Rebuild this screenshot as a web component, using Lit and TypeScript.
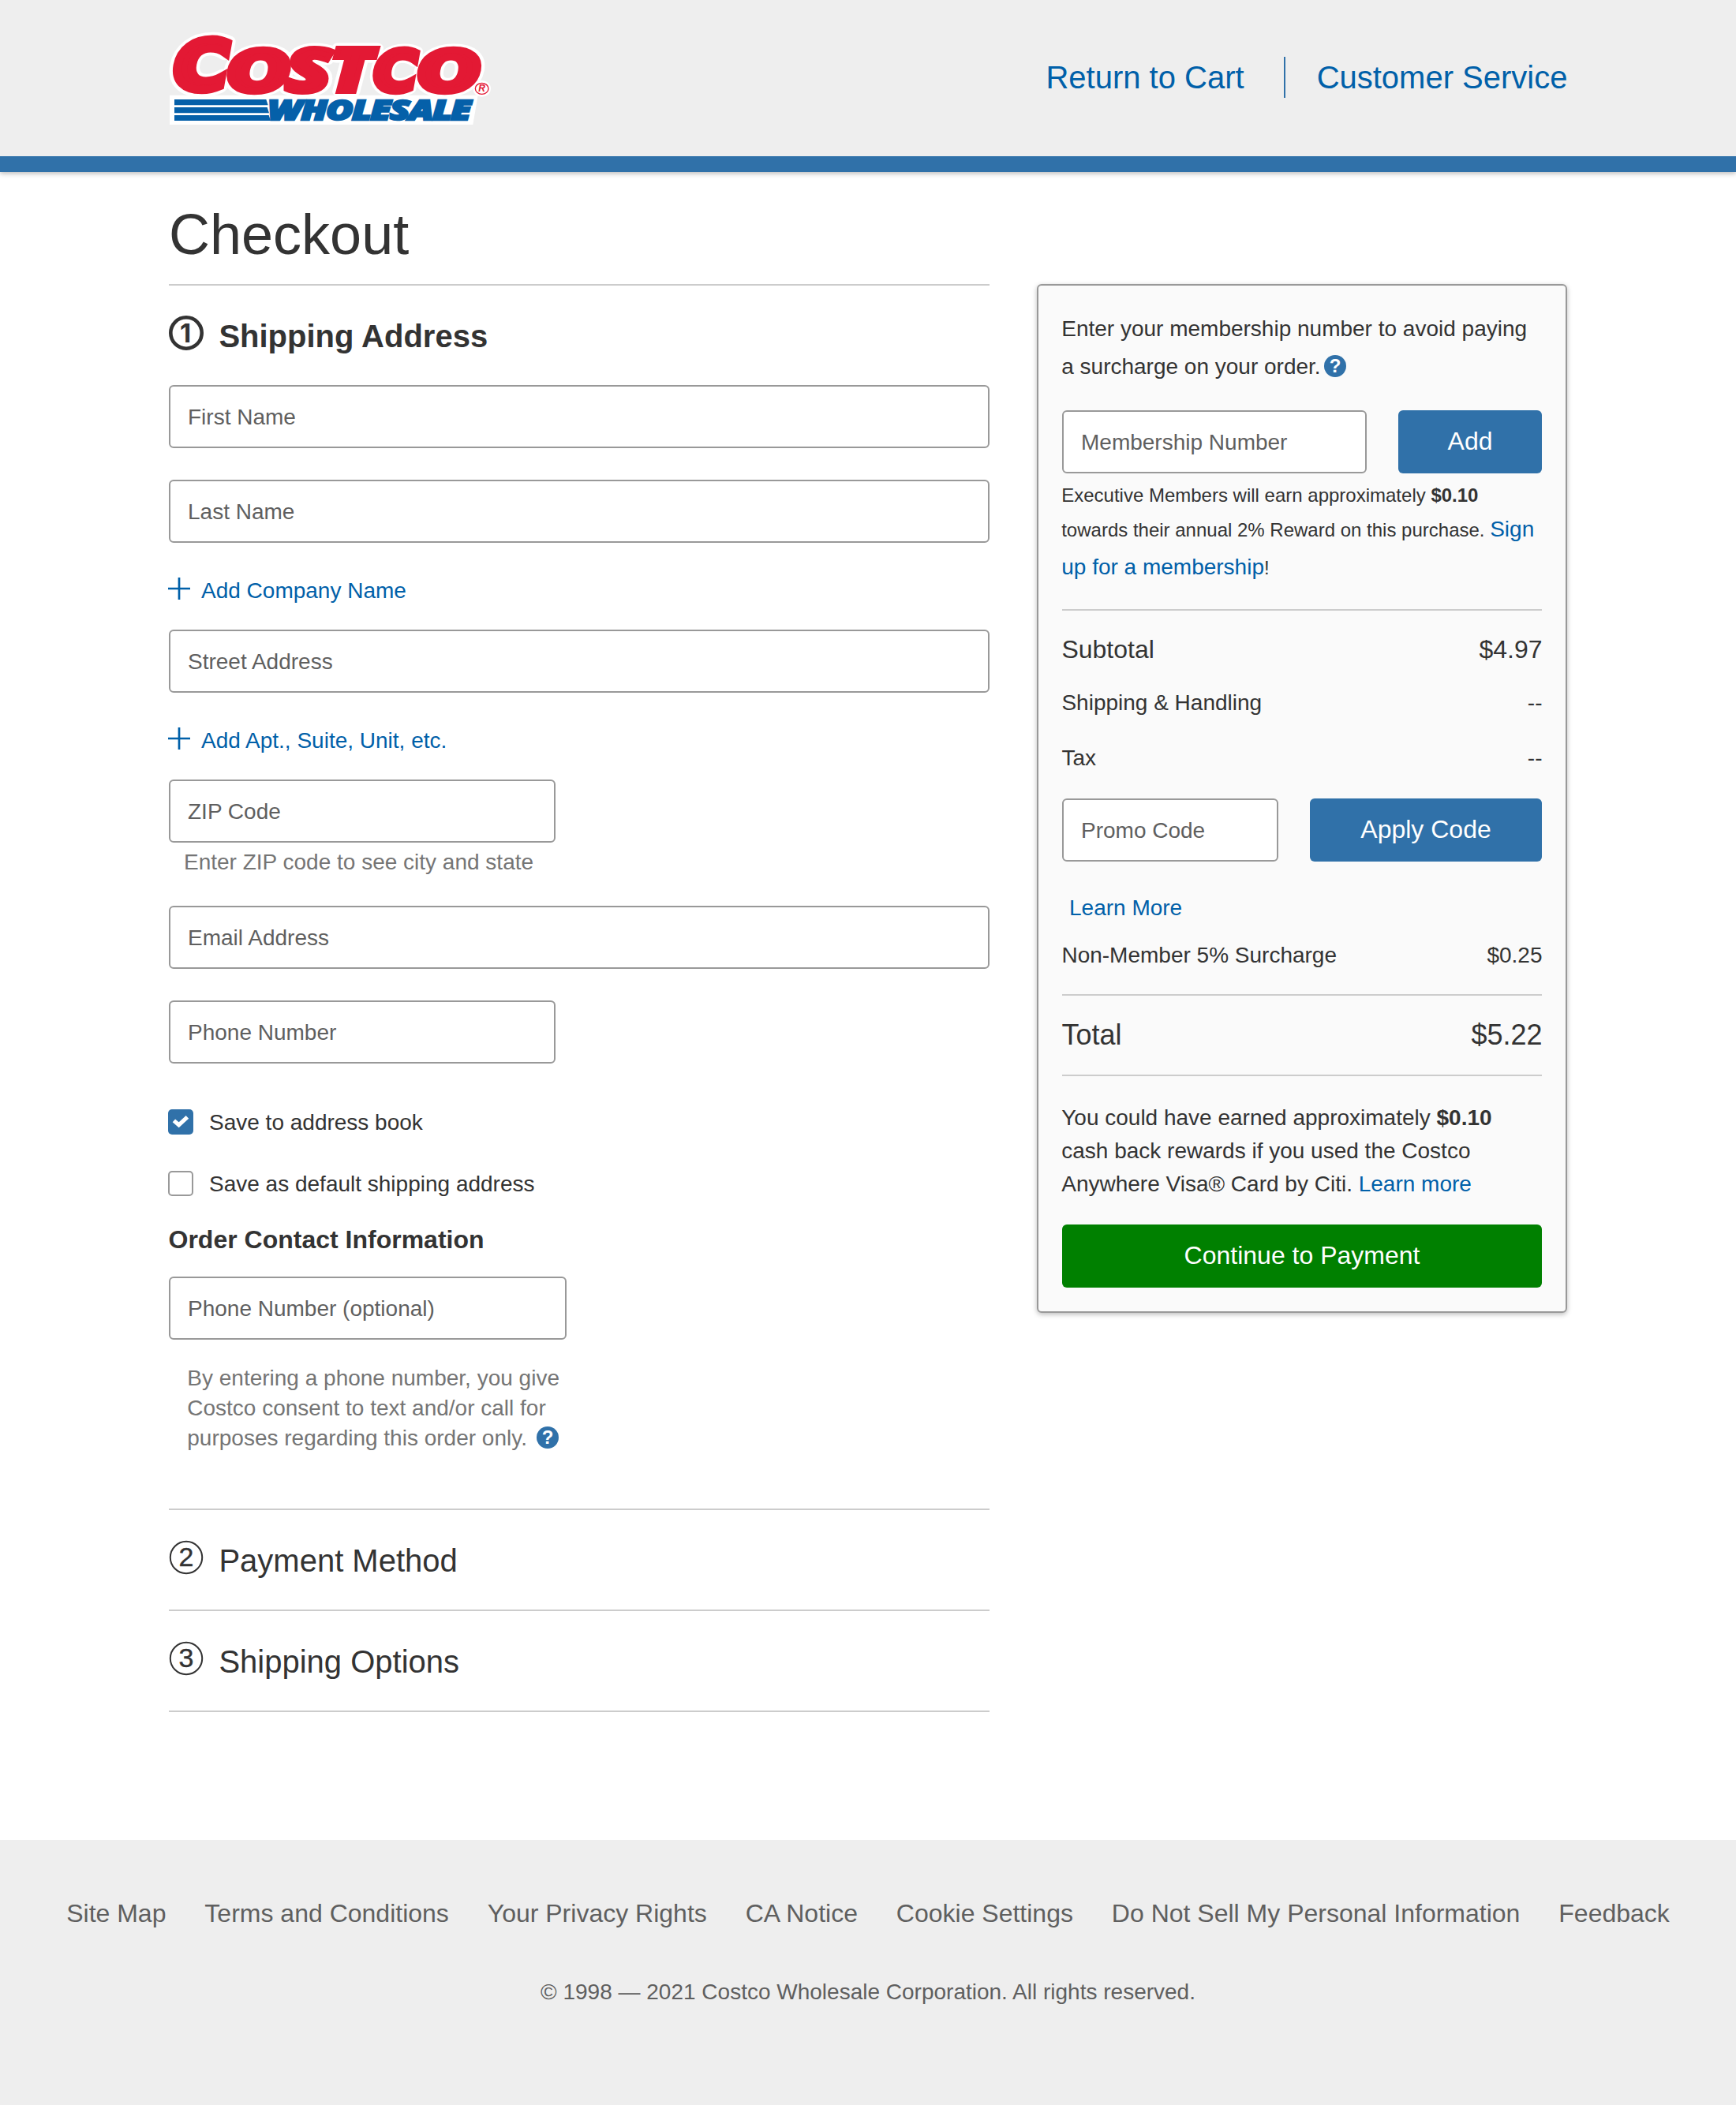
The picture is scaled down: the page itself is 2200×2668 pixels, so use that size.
import { LitElement, html, svg, css } from "lit";

interface Glyph { ch: string; kind: string; x: number; y: number; sx: number; sy: number; slant: number }

// Letter placements in the logo's 1320x420 space; slant is the horizontal shear.
const COSTCO: Glyph[] = [
  { ch: "C", kind: "round", x: 44.8, y: 248.2, sx: 2.82, sy: 2.56, slant: 0.18 },
  { ch: "O", kind: "round", x: 252, y: 255.2, sx: 2.78, sy: 2.11, slant: 0.18 },
  { ch: "S", kind: "sharp", x: 484.4, y: 256.6, sx: 3.19, sy: 2.27, slant: 0 },
  { ch: "T", kind: "sharp", x: 655, y: 257, sx: 2.92, sy: 2.266, slant: 0 },
  { ch: "C", kind: "round", x: 807.3, y: 255.2, sx: 2.25, sy: 2.11, slant: 0.18 },
  { ch: "O", kind: "round", x: 976, y: 255.2, sx: 2.78, sy: 2.11, slant: 0.18 },
];

const FOOTER_LINKS = [
  "Site Map", "Terms and Conditions", "Your Privacy Rights", "CA Notice",
  "Cookie Settings", "Do Not Sell My Personal Information", "Feedback",
];

class CostcoLogo extends LitElement {
  static styles = css`
    :host { display: block; width: 440px; height: 140px; }
    svg { display: block; }
    text { font-family: "Open Sans", "Noto Sans", sans-serif; font-weight: 800; font-style: italic; font-size: 100px; }
    .round { font-family: "DejaVu Sans", sans-serif; font-weight: 700; font-style: normal; stroke-width: 12; }
    .sharp { stroke-width: 8; }
    .red { fill: #e31934; stroke: #e31934; }
    .halo { fill: #fff; stroke: #fff; stroke-linejoin: round; }
    .halo.round { stroke-width: 21; }
    .halo.sharp { stroke-width: 17; }
    .word { letter-spacing: -3px; fill: #0560a9; stroke: #0560a9; stroke-width: 7; }
    .reg { font-family: "Liberation Sans", sans-serif; font-weight: 700; font-size: 36px; fill: #e31934; }
  `;
  render() {
    const letters = (cls: string) => COSTCO.map((g) => svg`
      <text class="${cls} ${g.kind}" transform="matrix(${g.sx} 0 ${-g.slant * g.sy} ${g.sy} ${g.x} ${g.y})">${g.ch}</text>`);
    return html`<svg width="440" height="140" viewBox="0 0 1320 420" role="img" aria-label="Costco Wholesale">
      <g aria-hidden="true">${letters("halo")}</g>
      <path d="M45 272H1217L1198 384H45Z" fill="#fff"/>
      <ellipse cx="1232" cy="247" rx="34" ry="31" fill="#fff"/>
      <path d="M63 288H412L419 310H63ZM63 318H416L423 340H63ZM63 348H422L429 369H63Z" fill="#0560a9"/>
      <text class="word" transform="translate(418 365.5) scale(1.395 1.04)">WHOLESALE</text>
      ${letters("red")}
      <ellipse cx="1232" cy="247" rx="25" ry="21" fill="#fff" stroke="#e31934" stroke-width="4"/>
      <text class="reg" x="1219" y="259">R</text>
    </svg>`;
  }
}
customElements.define("costco-logo", CostcoLogo);

class StepHeading extends LitElement {
  static properties = { n: { type: Number }, active: { type: Boolean, reflect: true } };
  declare n: number;
  declare active: boolean;
  static styles = css`
    :host { display: flex; gap: 19.4px; padding: 40px 0 38px; border-top: 2px solid #ccc; font-size: 40px; line-height: 48px; }
    :host([active]) { font-weight: 700; }
    svg { flex: none; margin: -2px 0 6px; }
    circle { fill: none; stroke: #333; stroke-width: 2; }
    text { font-family: "Liberation Sans", sans-serif; font-size: 34px; fill: #333; stroke: #333; stroke-width: 0.4; text-anchor: middle; }
    :host([active]) circle { stroke-width: 4.6; }
    :host([active]) text { font-family: Inter, sans-serif; font-size: 33px; stroke: none; }
  `;
  render() {
    return html`<svg width="44" height="44" viewBox="0 0 44 44">
      <circle cx="22" cy="22" r=${this.active ? 19.7 : 20.2}/>
      <text x=${this.active ? 21 : 22} y=${this.active ? 34 : 33.3}>${this.n}</text>
    </svg><slot></slot>`;
  }
}
customElements.define("step-heading", StepHeading);

const help = html`<svg class="help" width="28" height="28" viewBox="0 0 28 28">
  <circle cx="14" cy="14" r="14"/><text x="14" y="22.3">?</text></svg>`;

const addLink = (label: string) => html`<div class="add">
  <svg width="30" height="30" viewBox="0 0 30 30"><path d="M1 15H29M15 1V29"/></svg><span>${label}</span></div>`;

const field = (label: string, size = "") => html`<div class="field ${size}">${label}</div>`;

const row = (label: string, value: string, cls = "") =>
  html`<div class="row ${cls}"><span>${label}</span><span>${value}</span></div>`;

class AppRoot extends LitElement {
  static styles = css`
    :host { display: block; width: 2200px; min-height: 2668px; background: #fff; color: #333; font: 28px/40px "Liberation Sans", Arial, sans-serif; }
    * { box-sizing: border-box; }
    header { display: flex; justify-content: space-between; align-items: flex-start; height: 218px; padding: 0 213.5px 0 200px; background: #eee; border-bottom: 20px solid #3071a9; box-shadow: 0 2px 6px rgba(0,0,0,.27); }
    costco-logo { margin-top: 30px; }
    .top-links { display: flex; margin-top: 72px; font-size: 40px; line-height: 52px; color: #0060a9; }
    .top-links span + span { margin-left: 50px; padding-left: 40px; border-left: 2px solid #3071a9; }
    main { display: grid; grid-template-columns: 1040px 672px; column-gap: 60px; align-items: start; padding: 0 214px 162px; }
    step-heading { box-sizing: content-box; height: 48px; }
    h1 { margin: 39px 0 23px; font-size: 72px; line-height: 80px; font-weight: 400; }
    .field { height: 80px; padding-left: 22px; border: 2px solid #999; border-radius: 6px; background: #fff; color: #5f5f5f; line-height: 77px; }
    .field + .field { margin-top: 40px; }
    .zip { width: 490px; }
    .opt { width: 504px; }
    .add { display: flex; align-items: center; gap: 13px; height: 48px; margin: 36px 0 26px; color: #0060a9; }
    .add span { padding-top: 2px; }
    .add svg { margin: 0 0 4px -2px; }
    .add path { fill: none; stroke: #0060a9; stroke-width: 2.7; }
    .hint { margin: 5px 0 35px; padding-left: 19px; color: #757575; }
    .check { display: flex; align-items: center; gap: 20px; height: 32px; margin: 58px 0 0 -1px; }
    .check span + span { padding-top: 2px; }
    .check + .check { margin-top: 46px; }
    .box { width: 32px; height: 32px; border: 2px solid #999; border-radius: 5px; background: #fff; }
    .box.on { border: 0; background: #3071a9; }
    .box svg { display: block; }
    .box path { fill: none; stroke: #fff; stroke-width: 5.2; }
    h2 { margin: 35px 0 27px -0.5px; font-size: 32px; line-height: 40px; font-weight: 700; }
    .consent { margin: 30px 0 70px; padding-left: 23.3px; color: #757575; line-height: 38px; }
    .help { vertical-align: -4px; margin-left: 4.2px; }
    .help circle { fill: #3071a9; }
    .help text { fill: #fff; font: 700 24px "Liberation Sans", sans-serif; text-anchor: middle; }
    .end { border-bottom: 2px solid #ccc; }
    aside { margin-top: 142px; padding: 31px 30px 30px; border: 2px solid #999; border-radius: 6px; background: #fafafa; box-shadow: 0 2px 6px rgba(0,0,0,.27); }
    .member { line-height: 48px; margin: 0 0 31px -0.8px; }
    .pair { display: grid; column-gap: 40px; }
    .pair.m { grid-template-columns: 386px 182px; }
    .pair.p { grid-template-columns: 274px 294px; margin-top: 31px; }
    .btn { height: 80px; border-radius: 6px; background: #3071a9; color: #fff; font-size: 32px; line-height: 78px; text-align: center; }
    .go { margin-top: 30px; background: #008000; }
    .exec { margin: 6px 0 30px -0.8px; font-size: 24px; line-height: 44px; }
    .exec div + div + div { margin-top: 4px; }
    .link { color: #0060a9; }
    .exec .link { font-size: 28px; line-height: 20px; }
    hr { height: 2px; margin: 0; border: 0; background: #ccc; }
    .row { display: flex; justify-content: space-between; }
    .row span:first-child { margin-left: -0.6px; }
    .row span:last-child { margin-right: -0.5px; }
    .sub { margin-top: 25px; font-size: 32px; line-height: 48px; }
    .ship { margin-top: 24px; }
    .tax { margin-top: 30px; }
    .learn { margin: 39px 0 20px 9px; }
    .sur { margin-bottom: 29px; }
    .total { margin: 26px 0 26px; font-size: 36px; line-height: 48px; }
    .earn { margin: 32px 0 0 -0.8px; line-height: 42px; }
    footer { height: 336px; padding-top: 69px; background: #eee; color: #5f5f5f; text-align: center; }
    .foot { display: flex; justify-content: center; gap: 48.9px; font-size: 32px; line-height: 48px; }
    .copy { margin-top: 56px; }
  `;
  render() {
    return html`
      <header>
        <costco-logo></costco-logo>
        <nav class="top-links"><span>Return to Cart</span><span>Customer Service</span></nav>
      </header>
      <main>
        <section>
          <h1>Checkout</h1>
          <step-heading n="1" active>Shipping Address</step-heading>
          ${field("First Name")}${field("Last Name")}
          ${addLink("Add Company Name")}
          ${field("Street Address")}
          ${addLink("Add Apt., Suite, Unit, etc.")}
          ${field("ZIP Code", "zip")}
          <div class="hint">Enter ZIP code to see city and state</div>
          ${field("Email Address")}${field("Phone Number", "zip")}
          <div class="check"><span class="box on"><svg width="32" height="32" viewBox="0 0 32 32"><path d="M7.4 14.4L13.6 19.8L24.4 9.8"/></svg></span><span>Save to address book</span></div>
          <div class="check"><span class="box"></span><span>Save as default shipping address</span></div>
          <h2>Order Contact Information</h2>
          ${field("Phone Number (optional)", "opt")}
          <div class="consent">By entering a phone number, you give<br>Costco consent to text and/or call for<br>purposes regarding this order only. ${help}</div>
          <step-heading n="2">Payment Method</step-heading>
          <step-heading n="3" class="end">Shipping Options</step-heading>
        </section>
        <aside>
          <div class="member">Enter your membership number to avoid paying<br>a surcharge on your order.${help}</div>
          <div class="pair m">${field("Membership Number")}<div class="btn">Add</div></div>
          <div class="exec"><div>Executive Members will earn approximately <b>$0.10</b></div><div>towards their annual 2% Reward on this purchase. <span class="link">Sign</span></div><div><span class="link">up for a membership</span>!</div></div>
          <hr>
          ${row("Subtotal", "$4.97", "sub")}
          ${row("Shipping & Handling", "--", "ship")}
          ${row("Tax", "--", "tax")}
          <div class="pair p">${field("Promo Code")}<div class="btn">Apply Code</div></div>
          <div class="learn link">Learn More</div>
          ${row("Non-Member 5% Surcharge", "$0.25", "sur")}
          <hr>
          ${row("Total", "$5.22", "total")}
          <hr>
          <div class="earn">You could have earned approximately <b>$0.10</b><br>cash back rewards if you used the Costco<br>Anywhere Visa® Card by Citi. <span class="link">Learn more</span></div>
          <div class="btn go">Continue to Payment</div>
        </aside>
      </main>
      <footer>
        <nav class="foot">${FOOTER_LINKS.map((l) => html`<span>${l}</span>`)}</nav>
        <div class="copy">© 1998 — 2021 Costco Wholesale Corporation. All rights reserved.</div>
      </footer>`;
  }
}
customElements.define("app-root", AppRoot);
